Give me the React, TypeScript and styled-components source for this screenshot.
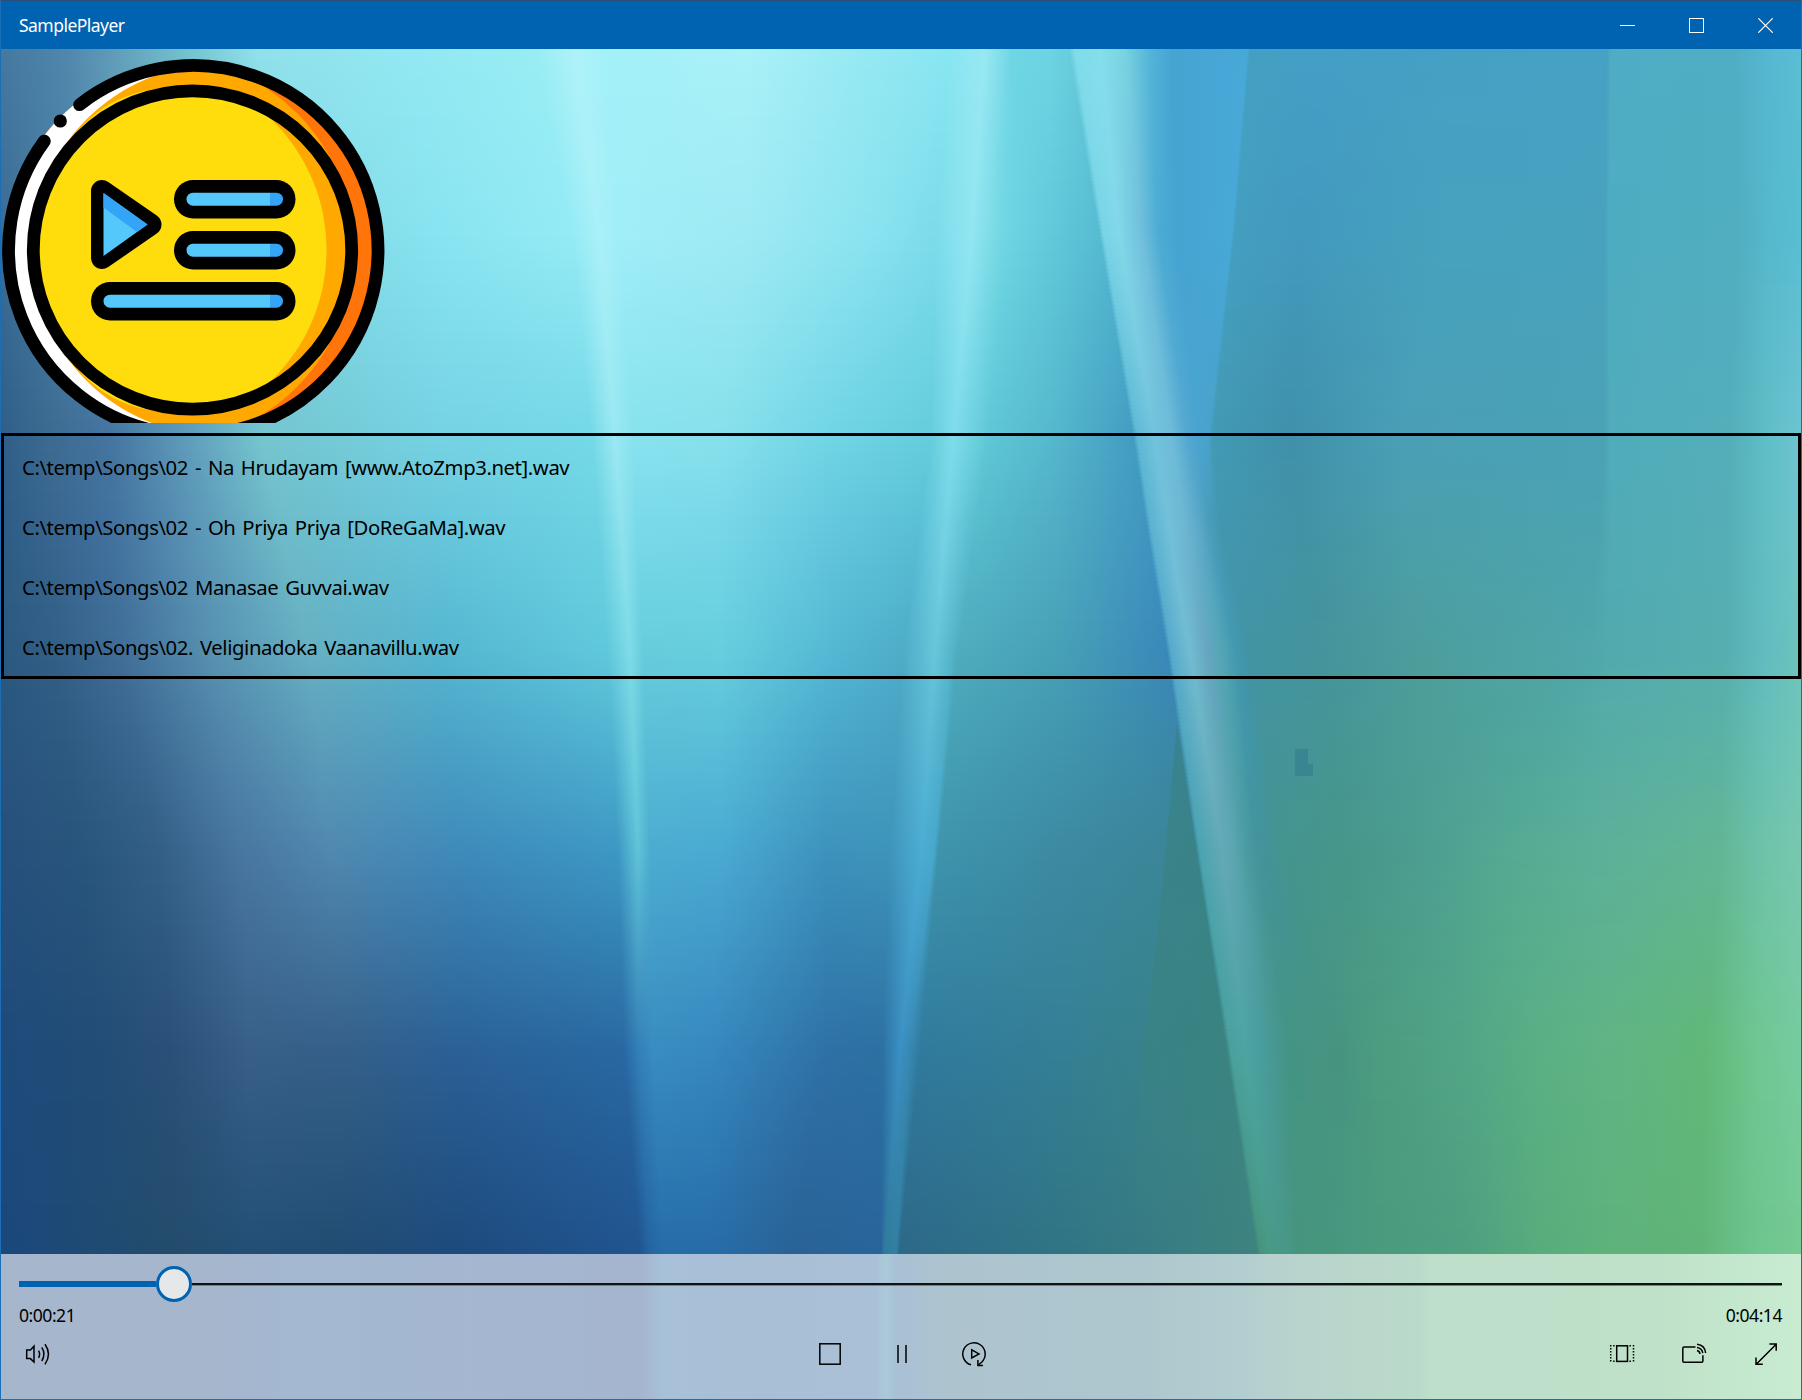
import React from "react";
import styled, { createGlobalStyle } from "styled-components";

const GlobalStyle = createGlobalStyle`
  * { box-sizing: border-box; }
  body { margin: 0; overflow: hidden; background: #0063b1; }
`;

const ACCENT = "#0063b1";

const Window = styled.div`
  position: relative;
  width: 1802px;
  height: 1400px;
  display: flex;
  flex-direction: column;
  border: 1px solid #1a6fb6;
  border-top-color: #2b5078;
  overflow: hidden;
  font-family: "Noto Sans", "Open Sans", sans-serif;
  color: #000;
`;

const TitleBar = styled.header`
  height: 48px;
  flex: none;
  display: flex;
  align-items: center;
  justify-content: space-between;
  padding: 0 1px 0 18px;
  background: ${ACCENT};
`;

const Title = styled.h1`
  margin: 0;
  font-size: 17.5px;
  line-height: 24px;
  font-weight: 400;
  letter-spacing: -0.53px;
  color: #fff;
`;

const Captions = styled.div`
  display: flex;
`;

const CaptionButton = styled.button`
  width: 69px;
  height: 48px;
  padding: 0;
  border: 0;
  background: none;
  display: flex;
  align-items: center;
  justify-content: center;
`;

const Content = styled.main`
  position: relative;
  flex: 1;
  min-height: 0;
  display: flex;
  flex-direction: column;
`;

const Backdrop = styled.svg`
  position: absolute;
  inset: 0;
  z-index: -1;
`;

const Cover = styled.svg`
  display: block;
  flex: none;
  margin-bottom: 10px;
`;

const Playlist = styled.ul`
  list-style: none;
  margin: 0;
  padding: 0;
  border: 3px solid #000;
  flex: none;
`;

const Track = styled.li`
  height: 60px;
  padding: 2px 18px 0;
  display: flex;
  align-items: center;
  font-size: 20.3px;
  letter-spacing: -0.4px;
  word-spacing: 2px;
  white-space: pre;
`;

const Transport = styled.footer`
  margin-top: auto;
  height: 145px;
  flex: none;
  padding-top: 12px;
  background: linear-gradient(
    90deg,
    #a5b6cd 0, #a5b6cd 230px, #a4b8d2 300px, #a5b5cf 640px,
    #a7c1d8 662px, #a9bfd6 760px, #a9c0d6 874px, #aac8d8 882px,
    #aac8d8 888px, #a9c0d6 894px, #adc4ce 950px, #aec7ce 1140px, #b2cdd0 1230px,
    #b8d3cd 1290px, #badaca 1416px, #bddfcb 1430px, #bfe1c9 1660px, #c4e8cd 1740px, #c8ebd1 1800px
  );
`;

const Slider = styled.div`
  display: flex;
  align-items: center;
  height: 36px;
  padding: 0 19px 0 18px;
`;

const Elapsed = styled.div`
  width: 137px;
  height: 6px;
  flex: none;
  background: ${ACCENT};
`;

const Thumb = styled.div`
  width: 36px;
  height: 36px;
  flex: none;
  border: 3px solid ${ACCENT};
  border-radius: 50%;
  background: #e6e7e9;
`;

const Remaining = styled.div`
  flex: 1;
  height: 3px;
  margin-top: 1px;
  background: linear-gradient(#0f1412 0 2px, #71847f 2px);
`;

const Times = styled.div`
  display: flex;
  justify-content: space-between;
  padding: 0 19px 0 18px;
  font-size: 17.6px;
  line-height: 26px;
  letter-spacing: -0.5px;
`;

const Buttons = styled.div`
  display: grid;
  grid-template-columns: 1fr auto 1fr;
  align-items: center;
  height: 52px;
  padding-left: 1px;
`;

const Group = styled.div<{ $align: "start" | "center" | "end" }>`
  display: flex;
  justify-content: ${(p) => p.$align};
  ${(p) => p.$align === "center" && "padding-left: 1px;"}
  ${(p) => p.$align === "end" && "margin-right: -1px;"}
`;

const IconButton = styled.button`
  width: 72px;
  height: 48px;
  padding: 0;
  border: 0;
  background: none;
  display: flex;
  align-items: center;
  justify-content: center;
`;

const Icon = ({ children }: { children: React.ReactNode }) => (
  <svg width="30" height="30" viewBox="-15 -15 30 30" fill="none" stroke="#000" strokeWidth="1.5">
    {children}
  </svg>
);

/* Colour mesh: every key row has the same number of "x#colour" stops. */
const MESH: [number, string][] = [
  [49, "0#4478a0 65#4f86ab 110#5f9ab8 190#74c4d0 255#90e0ea 410#92e8f2 535#98ecf4 575#aef2f8 612#a2f0f8 745#aaf1f8 870#94e8f2 950#88e6f2 985#98e8f2 1012#70d6e4 1025#6cd4e2 1050#6cd4e2 1069#68ccdc 1075#80dcea 1100#84deec 1125#78d2e0 1150#54b4d8 1172#46a4d2 1247#48a8d8 1250#44a0c2 1320#449ec6 1450#46a0c4 1607#46a2c4 1611#4eacc4 1735#50aec4 1772#56b8d2 1802#5cbed2"],
  [230, "0#3a6c94 60#4a80a6 110#5c98b6 210#6cb0c4 300#80d8e4 440#88e4f1 572#94ebf5 598#aaf0f8 620#a0eef8 745#9eeaf4 870#8ae3f0 935#7cdcea 972#92e6f2 1000#74d8e4 1010#6cd4e2 1055#60c8da 1099#56bcd2 1103#78d4e6 1119#82d8e8 1142#70bedc 1158#4cacd4 1176#46a4d2 1232#48a8d6 1235#449ec0 1300#429abe 1450#46a2be 1605#48a2be 1609#4eacc2 1737#50aec0 1768#56b8cc 1802#58bed2"],
  [440, "0#2e5e88 50#3c6a90 110#4474a0 180#5c98b8 260#74c4ce 440#74d2e2 592#74d8e6 615#9ae8f2 634#86e2ee 720#86e0ec 830#70d4e4 930#64ccdc 953#7edcea 980#66ccda 988#5ec6d6 1050#56b8cc 1134#429cc2 1138#5cb8d4 1155#72c2dc 1172#6ebcd8 1188#54a8d0 1198#4aa4d0 1208#48a2ca 1212#429ab4 1290#4090aa 1400#4a9fb6 1605#4aa2b4 1610#50acba 1730#54aeba 1765#5ebec6 1802#6fc4d2"],
  [520, "0#2c5c85 52#386690 114#4272a0 191#5a94b5 279#6ebcca 440#68c7dc 598#6cd2e2 621#8fe3ee 637#7adae8 720#78d8e8 830#65c8de 920#5ac0d5 946#75d4e4 969#5fc1d3 977#58bdcd 1054#50aec4 1146#4096c0 1150#5ab3d1 1168#72c0da 1185#6cb6d2 1199#5aa8c8 1207#4c9fbc 1212#469bb6 1220#4297b0 1301#4292a5 1408#4b9fac 1600#4ca3b0 1611#50abb6 1728#55aeb6 1765#60bec3 1802#6ec4ca"],
  [650, "0#2a5880 55#325f86 120#406e98 210#5690b0 310#66b0c2 440#54b6d0 608#60c8dc 630#7edce6 643#66ccdc 720#66cede 830#54b8d4 903#4eacc8 935#66c6da 952#54b4c8 958#4eacbe 1060#46a0b6 1167#3a88ba 1171#56aacc 1190#72bcd0 1207#66a6c0 1222#52a6b4 1236#4298b0 1242#4296ac 1248#4294a4 1320#44949c 1420#4c9e9c 1590#50a6aa 1610#52aaae 1725#56aeb0 1765#62bcc0 1802#6cc4bc"],
  [850, "0#26507c 80#28557c 160#335f86 240#4876a0 330#5088b0 460#3e8aba 618#3c98c4 638#60c4d8 650#4cacd0 720#4aaad2 830#3c92bc 889#3e94ba 921#4cacd2 934#48a8cc 938#3e94ac 1060#3c8aa2 1196#3a8494 1200#4aa4b0 1222#64a8b6 1234#5aa6b0 1246#4a9ca2 1256#44949c 1266#42939a 1280#449490 1340#46968a 1420#4c9e90 1510#54aa92 1600#5cb099 1720#62b694 1760#6cc2a8 1802#78c8b0"],
  [1050, "0#1e4a7c 90#214c76 170#2a5078 250#385f88 340#355f88 460#2a6096 624#2868a2 638#327eb6 653#388cc0 710#3688be 830#2e70a6 882#2c70a2 900#3a90c4 909#3888b4 920#307a9e 1060#347f94 1227#3a8484 1231#4aa09c 1246#4ca4a2 1262#489c9c 1280#46968c 1290#449484 1305#469482 1340#469480 1380#4c9c80 1470#52a686 1540#5ab084 1610#60b484 1705#60b878 1755#6ec690 1802#76cca0"],
  [1253, "0#1a487c 90#1e4a74 170#234c6a 250#224e76 340#204c72 460#1d4a7c 640#205490 650#2464a0 663#266ca8 710#266ca8 790#2a6296 881#28649a 884#307a9c 896#3280a2 899#2d6888 1060#307484 1257#3e837f 1261#46947c 1270#489a84 1285#489888 1300#46947c 1315#46967e 1330#46967e 1345#489880 1375#4a9a7e 1460#4e9e80 1540#58ac7c 1610#5eb27a 1700#60b478 1750#6cc48c 1802#76ca92"],
];

type Stop = { x: number; rgb: number[] };
const parse = (row: string): Stop[] =>
  row.split(" ").map((s) => {
    const [x, hex] = s.split("#");
    return { x: Number(x), rgb: [0, 2, 4].map((i) => parseInt(hex.slice(i, i + 2), 16)) };
  });
const KEYS = MESH.map(([y, row]) => ({ y, stops: parse(row) }));
const STEP = 4;

const Wallpaper = () => {
  const bands: { y: number; stops: Stop[] }[] = [];
  for (let y = 49; y < 1258; y += STEP) {
    let k = 0;
    while (k < KEYS.length - 2 && KEYS[k + 1].y <= y) k++;
    const a = KEYS[k];
    const b = KEYS[k + 1];
    const t = Math.min(1, (y - a.y) / (b.y - a.y));
    bands.push({
      y,
      stops: a.stops.map((s, i) => ({
        x: s.x + (b.stops[i].x - s.x) * t,
        rgb: s.rgb.map((c, j) => Math.round(c + (b.stops[i].rgb[j] - c) * t)),
      })),
    });
  }
  return (
    <Backdrop width="1800" height="1206" viewBox="1 49 1800 1206">
      <defs>
        {bands.map((b, i) => (
          <linearGradient key={i} id={`band${i}`} gradientUnits="userSpaceOnUse" x1="0" x2="1802" y1="0" y2="0">
            {b.stops.map((s, j) => (
              <stop key={j} offset={s.x / 1802} stopColor={`rgb(${s.rgb.join(",")})`} />
            ))}
          </linearGradient>
        ))}
        <linearGradient id="shade" x1="0" x2="0" y1="0" y2="1">
          <stop offset="0" stopColor="#38807c" stopOpacity="0.55" />
          <stop offset="0.6" stopColor="#3a827e" stopOpacity="0.5" />
          <stop offset="1" stopColor="#3c8380" stopOpacity="0" />
        </linearGradient>
      </defs>
      {bands.map((b, i) => (
        <rect key={i} x="0" y={b.y} width="1802" height={STEP} fill={`url(#band${i})`} shapeRendering="crispEdges" />
      ))}
      <path d="M1177 722 L1162 890 L1138 1100 L1134 1253 H1257 L1227 1050 L1197 850 Z" fill="url(#shade)" />
      <path d="M1295 749 H1308 V764 H1313 V776 H1295 Z" fill="#3a8592" />
    </Backdrop>
  );
};

const Pill = ({ x, y }: { x: number; y: number }) => (
  <g>
    <rect x={x} y={y} width={295.5 - x} height="38.5" rx="19.2" fill="#000" />
    <path d={`M270 ${y + 12.7} H${x + 19} a6.5 6.5 0 0 0 0 13 H270 Z`} fill="#54c8fa" />
    <path d={`M270 ${y + 12.7} H276.5 a6.5 6.5 0 0 1 0 13 H270 Z`} fill="#34a4f6" />
  </g>
);

const PlaylistCoin = () => (
  <Cover width="384" height="374" viewBox="1 49 384 374">
    <defs>
      <clipPath id="coin"><circle cx="193.5" cy="250" r="188" /></clipPath>
      <clipPath id="face"><circle cx="192.5" cy="250" r="160" /></clipPath>
    </defs>
    <g clipPath="url(#coin)">
      <rect width="400" height="450" fill="#ff750a" />
      <circle cx="160" cy="250" r="193.6" fill="#ffa900" />
      <path d="M0 40 H217.4 V65 A185 185 0 0 0 217.4 435 V460 H0 Z" fill="#fff" />
      <path d="M76 133 Q106 96 155 89 V95 L80 140 Z M76 367 Q106 404 155 411 V405 L80 360 Z" fill="#ffdd0c" />
    </g>
    <g clipPath="url(#face)">
      <circle cx="192.5" cy="250" r="160" fill="#ffa900" />
      <circle cx="144.6" cy="250" r="182" fill="#ffdd0c" />
    </g>
    <circle cx="192.5" cy="250" r="159.2" fill="none" stroke="#000" strokeWidth="12.8" />
    <path d="M79.6 104.7 A184.7 184.7 0 1 1 44.3 141.1" fill="none" stroke="#000" strokeWidth="12.8" strokeLinecap="round" />
    <circle cx="60.3" cy="121" r="6.6" />
    <path d="M102 191 L150.5 224.5 L102 258 Z" stroke="#000" strokeWidth="22" strokeLinejoin="round" />
    <path d="M103.5 193 L147.5 224.5 L103.5 256 Z" fill="#54c8fa" />
    <path d="M103.5 193 L147.5 224.5 L137 232 L103.5 207.5 Z" fill="#34a4f6" />
    <Pill x={174} y={180} />
    <Pill x={174} y={231} />
    <Pill x={91} y={282} />
  </Cover>
);

const TRACKS = [
  "C:\\temp\\Songs\\02 - Na Hrudayam [www.AtoZmp3.net].wav",
  "C:\\temp\\Songs\\02 - Oh Priya Priya [DoReGaMa].wav",
  "C:\\temp\\Songs\\02 Manasae Guvvai.wav",
  "C:\\temp\\Songs\\02. Veliginadoka Vaanavillu.wav",
];

export default function App() {
  return (
    <>
      <GlobalStyle />
      <Window>
        <TitleBar>
          <Title>SamplePlayer</Title>
          <Captions>
            <CaptionButton aria-label="Minimize">
              <svg width="15" height="15"><path d="M0 7.5H15" stroke="#fff" /></svg>
            </CaptionButton>
            <CaptionButton aria-label="Maximize">
              <svg width="15" height="15"><rect x=".5" y=".5" width="14" height="14" fill="none" stroke="#fff" /></svg>
            </CaptionButton>
            <CaptionButton aria-label="Close">
              <svg width="15" height="15"><path d="M.3 .3 14.7 14.7M14.7 .3 .3 14.7" stroke="#fff" strokeWidth="1.2" /></svg>
            </CaptionButton>
          </Captions>
        </TitleBar>
        <Content>
          <Wallpaper />
          <PlaylistCoin />
          <Playlist>
            {TRACKS.map((path) => (
              <Track key={path}>{path}</Track>
            ))}
          </Playlist>
          <Transport>
            <Slider>
              <Elapsed />
              <Thumb />
              <Remaining />
            </Slider>
            <Times>
              <span>0:00:21</span>
              <span>0:04:14</span>
            </Times>
            <Buttons>
              <Group $align="start">
                <IconButton aria-label="Volume">
                  <Icon>
                    <path d="M-11.3 -4 H-7.6 L-4 -7.8 V8 L-7.6 4.6 H-11.3 Z" />
                    <path d="M.6 -3.4 Q2.6 0 .6 3.8 M3.8 -6.6 Q8 0 3.8 7 M7 -9.8 Q14 0 7 10.4" />
                  </Icon>
                </IconButton>
              </Group>
              <Group $align="center">
                <IconButton aria-label="Stop">
                  <Icon><rect x="-10.2" y="-10.2" width="20.4" height="20.4" /></Icon>
                </IconButton>
                <IconButton aria-label="Pause">
                  <Icon><path d="M-4 -9 V9 M4 -9 V9" /></Icon>
                </IconButton>
                <IconButton aria-label="Repeat">
                  <Icon>
                    <path d="M-3 10.8 A11.2 11.2 0 1 1 7.6 8.2 L4.2 11.2" />
                    <path d="M3.9 6 V11.4 H9" />
                    <path d="M-2.3 -4.2 V4 L5 -.1 Z" />
                  </Icon>
                </IconButton>
              </Group>
              <Group $align="end">
                <IconButton aria-label="Aspect ratio">
                  <Icon>
                    <rect x="-5.3" y="-8.2" width="10.8" height="15.6" />
                    <path d="M-11.3 -9 V8 M11.5 -9 V8 M-8.9 -8.3 H-7 M-8.9 7.3 H-7 M7.4 -8.3 H9.3 M7.4 7.3 H9.3" strokeDasharray="1.5 1.5" />
                  </Icon>
                </IconButton>
                <IconButton aria-label="Cast">
                  <Icon>
                    <path d="M1.5 -6.9 H-10 Q-11.2 -6.9 -11.2 -5.6 V7 Q-11.2 8.3 -10 8.3 H7.6 Q8.9 8.3 8.9 7 V1.2" />
                    <path d="M3 -3.4 Q5.6 -2.8 6 0 M3 -6.5 Q8 -5.8 8.8 -.8 M3 -9.8 Q11 -9 11.6 -1" />
                  </Icon>
                </IconButton>
                <IconButton aria-label="Full screen">
                  <Icon><path d="M-9.8 10.2 L10.2 -9.8 M3.4 -10 H10.2 V-3.2 M-10 3.4 V10.2 H-3.2" /></Icon>
                </IconButton>
              </Group>
            </Buttons>
          </Transport>
        </Content>
      </Window>
    </>
  );
}
